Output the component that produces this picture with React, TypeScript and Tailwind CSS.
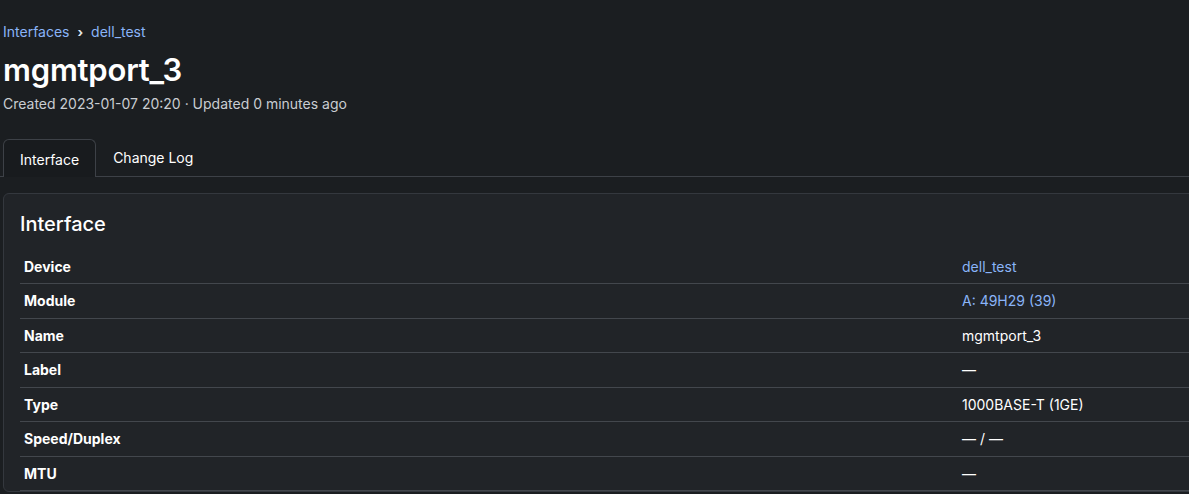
import React from "react";

const rows: { label: string; value: string; link?: boolean }[] = [
  { label: "Device", value: "dell_test", link: true },
  { label: "Module", value: "A: 49H29 (39)", link: true },
  { label: "Name", value: "mgmtport_3" },
  { label: "Label", value: "—" },
  { label: "Type", value: "1000BASE-T (1GE)" },
  { label: "Speed/Duplex", value: "— / —" },
  { label: "MTU", value: "—" },
];

export default function App() {
  return (
    <div
      className="w-[1189px] h-[494px] overflow-hidden bg-[#1b1e21] text-[#f5f7fb]"
      style={{ fontFamily: "Inter, 'Noto Sans', sans-serif" }}
    >
      <div className="pl-[3px] pt-[22px]">
        <div className="flex items-center text-[14px] leading-[20px] text-[#8ab4f8]">
          <span>Interfaces</span>
          <span className="mx-[8px] text-[#e5e7eb] text-[13px] font-bold">›</span>
          <span>dell_test</span>
        </div>
        <h1 className="mt-[8px] text-[31px] leading-[40px] font-semibold tracking-[-0.2px] text-white">
          mgmtport_3
        </h1>
        <div className="mt-[4px] text-[14px] leading-[20px] text-[#c9cdd2]">
          Created 2023-01-07 20:20 · Updated 0 minutes ago
        </div>
      </div>

      <div className="mt-[25px] flex items-end border-b border-[#3d4147] pl-[3px] h-[38px]">
        <div className="h-[38px] -mb-px px-[16px] flex items-center rounded-t-[6px] border border-b-0 border-[#3d4147] bg-[#181b1e] text-[14px] text-white">
          <span className="pt-[2px]">Interface</span>
        </div>
        <div className="h-[38px] px-[17px] flex items-center text-[14px] text-white">
          <span>Change Log</span>
        </div>
      </div>

      <div className="ml-[3px] mt-[16px] w-[1300px] rounded-[6px] border border-[#34383e] bg-[#212428] pt-[16px] px-[16px]">
        <h2 className="text-[20px] leading-[28px] font-medium text-white mb-[11px]">Interface</h2>
        <table className="w-full border-collapse text-[14px]">
          <tbody>
            {rows.map((r) => (
              <tr key={r.label} className="border-b border-[#43474d] h-[34.5px]">
                <th className="w-[938px] px-[4px] text-left font-bold text-white">{r.label}</th>
                <td className={"px-[4px] " + (r.link ? "text-[#8ab4f8]" : "text-white")}>{r.value}</td>
              </tr>
            ))}
          </tbody>
        </table>
      </div>
    </div>
  );
}
